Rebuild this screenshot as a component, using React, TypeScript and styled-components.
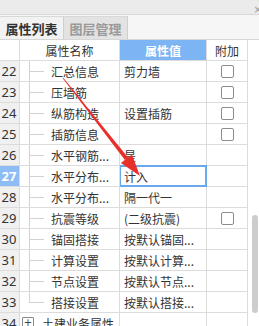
import React from "react";
import styled, { createGlobalStyle } from "styled-components";

const Global = createGlobalStyle`
  html, body { margin: 0; padding: 0; background: #ffffff; }
  body { font-family: "Noto Sans CJK SC", "Noto Sans", sans-serif; }
  * { box-sizing: border-box; }
`;

const Panel = styled.div`
  position: relative;
  width: 259px;
  height: 326px;
  overflow: hidden;
  background: #ffffff;
  display: flex;
  flex-direction: column;
`;

const TitleStrip = styled.div`
  height: 15px;
  background: #ebebeb;
  border-bottom: 1px solid #d8d8d8;
  display: flex;
  justify-content: flex-end;
  align-items: center;
  flex-shrink: 0;
`;

const Close = styled.span`
  font-family: "DejaVu Sans", sans-serif;
  font-size: 10px;
  line-height: 10px;
  color: #9a9a9a;
  margin-right: -3px;
  margin-top: 5px;
`;

const TabBar = styled.div`
  height: 24px;
  background: #f6f6f6;
  display: flex;
  align-items: flex-end;
  flex-shrink: 0;
`;

const Tab = styled.div<{ $active?: boolean }>`
  width: 64px;
  height: 23px;
  display: flex;
  align-items: center;
  justify-content: center;
  font-size: 13px;
  font-weight: 700;
  color: ${(p) => (p.$active ? "#333333" : "#9a9a9a")};
  background: ${(p) => (p.$active ? "#f2f2f2" : "#e3e3e3")};
  border-right: 1px solid #cfcfcf;
  border-top: 1px solid #d8d8d8;
`;

const Body = styled.div`
  display: flex;
  flex: 1;
  min-height: 0;
  border-top: 1px solid #d6d6d6;
`;

const Table = styled.div`
  width: 248px;
  display: flex;
  flex-direction: column;
`;

const Row = styled.div`
  display: grid;
  grid-template-columns: 20px 100px 87px 41px;
  height: 21px;
  flex-shrink: 0;
`;

const Cell = styled.div`
  border-right: 1px solid #dcdcdc;
  border-bottom: 1px solid #dcdcdc;
  font-size: 12px;
  color: #333333;
  display: flex;
  align-items: center;
  overflow: hidden;
  white-space: nowrap;
`;

const NumCell = styled(Cell)<{ $sel?: boolean; $head?: boolean }>`
  justify-content: center;
  font-family: "Noto Sans", sans-serif;
  font-size: 13px;
  background: ${(p) => (p.$head ? "#ffffff" : p.$sel ? "#8cbdf5" : "#f0f0f0")};
  color: ${(p) => (p.$sel ? "#ffffff" : "#333333")};
  font-weight: ${(p) => (p.$sel ? 700 : 400)};
  padding-right: 1px;
`;

const HeadCell = styled(Cell)<{ $blue?: boolean }>`
  justify-content: center;
  background: ${(p) => (p.$blue ? "#7db4f3" : "#ffffff")};
  color: ${(p) => (p.$blue ? "#ffffff" : "#333333")};
  font-weight: ${(p) => (p.$blue ? 700 : 400)};
  font-size: 12px;
`;

const NameCell = styled(Cell)<{ $group?: boolean }>`
  position: relative;
  padding-left: ${(p) => (p.$group ? "22px" : "31px")};
`;

const TreeV = styled.span<{ $last?: boolean }>`
  position: absolute;
  left: 9px;
  top: -1px;
  bottom: ${(p) => (p.$last ? "10px" : "-1px")};
  border-left: 1px solid #d2d2d2;
`;

const TreeH = styled.span`
  position: absolute;
  left: 9px;
  top: 10px;
  width: 15px;
  border-top: 1px solid #d2d2d2;
`;

const Plus = styled.span`
  position: absolute;
  left: 2px;
  top: 4px;
  width: 12px;
  height: 12px;
  border: 1px solid #8a8a8a;
  border-radius: 1px;
  font-size: 10px;
  line-height: 9px;
  text-align: center;
  font-family: "DejaVu Sans", sans-serif;
  color: #444;
`;

const ValueCell = styled(Cell)<{ $sel?: boolean }>`
  padding-left: 4px;
  ${(p) =>
    p.$sel
      ? `border: 2px solid #6aa8ec; margin-top: -1px; height: 22px; margin-left: -1px; width: 88px; padding-left: 3px;`
      : ""}
`;

const ExtraCell = styled(Cell)`
  justify-content: center;
`;

const Check = styled.span`
  width: 13px;
  height: 13px;
  border: 1px solid #8c8c8c;
  border-radius: 2px;
  background: #ffffff;
  margin-left: 1px;
`;

const Side = styled.div`
  flex: 1;
  display: flex;
  justify-content: flex-end;
  padding-top: 175px;
  padding-right: 1px;
`;

const Thumb = styled.div`
  width: 6px;
  height: 98px;
  background: #cdcdcd;
  border-radius: 3px;
`;

const Arrow = styled.svg`
  position: absolute;
  left: 0;
  top: 0;
  pointer-events: none;
`;

type R = { n: number; name: string; value?: string; check?: boolean; plus?: boolean };

const rows: R[] = [
  { n: 22, name: "汇总信息", value: "剪力墙", check: true },
  { n: 23, name: "压墙筋", check: true },
  { n: 24, name: "纵筋构造", value: "设置插筋", check: true },
  { n: 25, name: "插筋信息", check: true },
  { n: 26, name: "水平钢筋...", value: "是" },
  { n: 27, name: "水平分布...", value: "计入" },
  { n: 28, name: "水平分布...", value: "隔一代一" },
  { n: 29, name: "抗震等级", value: "(二级抗震)", check: true },
  { n: 30, name: "锚固搭接", value: "按默认锚固..." },
  { n: 31, name: "计算设置", value: "按默认计算..." },
  { n: 32, name: "节点设置", value: "按默认节点..." },
  { n: 33, name: "搭接设置", value: "按默认搭接..." },
  { n: 34, name: "土建业务属性", plus: true },
];

export default function App() {
  return (
    <>
      <Global />
      <Panel>
        <TitleStrip>
          <Close>×</Close>
        </TitleStrip>
        <TabBar>
          <Tab $active>属性列表</Tab>
          <Tab>图层管理</Tab>
        </TabBar>
        <Body>
          <Table>
            <Row>
              <NumCell $head />
              <HeadCell>属性名称</HeadCell>
              <HeadCell $blue>属性值</HeadCell>
              <HeadCell>附加</HeadCell>
            </Row>
            {rows.map((r) => (
              <Row key={r.n}>
                <NumCell $sel={r.n === 27}>{r.n}</NumCell>
                <NameCell $group={r.plus}>
                  {r.plus ? (
                    <Plus>+</Plus>
                  ) : (
                    <>
                      <TreeV $last={r.n === 33} />
                      <TreeH />
                    </>
                  )}
                  {r.name}
                </NameCell>
                <ValueCell $sel={r.n === 27}>{r.value ?? ""}</ValueCell>
                <ExtraCell>{r.check ? <Check /> : null}</ExtraCell>
              </Row>
            ))}
          </Table>
          <Side>
            <Thumb />
          </Side>
        </Body>
        <Arrow width="259" height="326" viewBox="0 0 259 326">
          <polygon
            points="62.7,78.3 63.3,77.7 128.0,157.6 124.9,160.0"
            fill="#e8302a"
          />
          <polygon points="140,176 120.9,163.0 131.9,154.4" fill="#e8302a" />
        </Arrow>
      </Panel>
    </>
  );
}
